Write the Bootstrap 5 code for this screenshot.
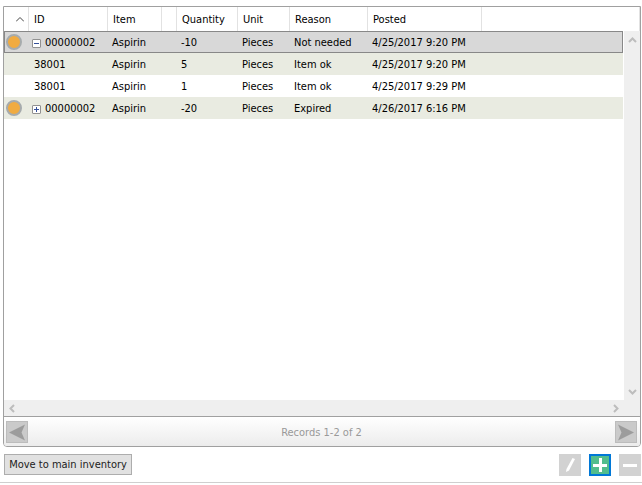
<!DOCTYPE html>
<html lang="en">
<head>
<meta charset="utf-8">
<meta name="viewport" content="width=device-width, initial-scale=1">
<title>Inventory records</title>
<link href="https://cdn.jsdelivr.net/npm/bootstrap@5.3.0/dist/css/bootstrap.min.css" rel="stylesheet">
<style>
body { font-family: "DejaVu Sans Condensed", "Noto Sans", sans-serif; font-size: 11px; line-height: 14px; color: #000; background: #fff; }
button { font: inherit; padding: 0; border-radius: 0; }
.page-wrap { padding: 6px 1px 2px 3px; }
.records { border: 1px solid #a0a0a0; border-radius: 0 0 4px 4px; }
.grid-table { table-layout: fixed; border-collapse: separate; border-spacing: 0; }
.grid-table th, .grid-table td { padding: 2px 0 0 5px; white-space: nowrap; vertical-align: middle; }
.grid-table th { height: 24px; font-weight: 400; border-right: 1px solid #e2e2e2; }
.grid-table th:last-child { border-right: 0; }
.grid-table td { height: 22px; padding-left: 4px; }
.grid-table td:first-child { padding: 0 0 0 2px; }
.grid-table td:nth-child(2) { padding-left: 5px; }
.grid-table td.parent-id { padding-left: 3px; }
.grid-table tbody tr:nth-child(even) td { background: #e9ebe1; }
.grid-table tr.selected td { background: #d8d8d8; }
.grid-table tr.selected { outline: 1px solid #888; outline-offset: -1px; }
.c-state { width: 25px; } .c-id { width: 79px; } .c-item { width: 54px; } .c-gap { width: 15px; }
.c-qty { width: 61px; } .c-unit { width: 52px; } .c-reason { width: 78px; } .c-posted { width: 114px; }
.state-dot { width: 16px; height: 16px; background: #f0ab41; border: 2px solid #a6abad; }
.toggle { width: 9px; height: 9px; border: 1px solid #919191; border-radius: 1px; background: #fff; margin-right: 4px; }
.side { width: 17px; }
.side-head { height: 24px; border-right: 1px solid #e2e2e2; }
.v-scroll { width: 16px; background: #efefef; margin-left: 1px; }
.h-scroll { height: 16px; background: #efefef; padding: 0 20px 0 4px; }
.scroll-btn { width: 9px; height: 9px; border: 0; background: none; }
.v-scroll .scroll-btn { margin: 4px 0; }
.pager { height: 30px; padding: 0 3px 0 2px; border-top: 1px solid #a0a0a0; background: linear-gradient(#fff, #ececec); border-radius: 0 0 3px 3px; color: #999; }
.pager span { padding-top: 2px; }
.pager-btn { width: 22px; height: 22px; border: 1px solid #bcbcbc; background: #cacaca; }
.actions { padding: 7px 0 4px 1px; }
.move-btn { width: 128px; height: 21px; border: 1px solid #adadad; background: #e1e1e1; color: #222; padding-top: 1px; }
.tool-btn { width: 22px; height: 22px; border: 0; background: #d2d2d2; }
.tool-btn.add { border: 2px solid #0078d7; background: #52bd8d; }
.tools { gap: 8px; }
.end-line { height: 1px; background: #cfcfcf; margin-bottom: 2px; }
svg { display: block; }
</style>
</head>
<body>
<div class="d-flex flex-column min-vh-100">
<main class="page-wrap d-flex flex-column flex-grow-1">
  <section class="records d-flex flex-column flex-grow-1" aria-label="Records">
    <div class="d-flex flex-grow-1">
      <div class="flex-grow-1">
        <table class="grid-table w-100">
          <colgroup><col class="c-state"><col class="c-id"><col class="c-item"><col class="c-gap"><col class="c-qty"><col class="c-unit"><col class="c-reason"><col class="c-posted"><col></colgroup>
          <thead>
            <tr>
              <th aria-label="State, sorted ascending"><svg class="ms-auto me-1" width="8" height="8" viewBox="0 0 8 8"><path d="M0 5.500 4 1.500 8 5.500" fill="none" stroke="#444"/></svg></th>
              <th>ID</th><th>Item</th><th></th><th>Quantity</th><th>Unit</th><th>Reason</th><th>Posted</th><th></th>
            </tr>
          </thead>
          <tbody>
            <tr class="selected">
              <td><div class="state-dot rounded-circle"></div></td>
              <td class="parent-id"><div class="d-flex align-items-center"><button type="button" class="toggle" aria-label="Collapse"><svg width="7" height="7"><path d="M1 3.5h5" stroke="#34509a"/></svg></button>00000002</div></td>
              <td>Aspirin</td><td></td><td>-10</td><td>Pieces</td><td>Not needed</td><td>4/25/2017 9:20 PM</td><td></td>
            </tr>
            <tr><td></td><td>38001</td><td>Aspirin</td><td></td><td>5</td><td>Pieces</td><td>Item ok</td><td>4/25/2017 9:20 PM</td><td></td></tr>
            <tr><td></td><td>38001</td><td>Aspirin</td><td></td><td>1</td><td>Pieces</td><td>Item ok</td><td>4/25/2017 9:29 PM</td><td></td></tr>
            <tr>
              <td><div class="state-dot rounded-circle"></div></td>
              <td class="parent-id"><div class="d-flex align-items-center"><button type="button" class="toggle" aria-label="Expand"><svg width="7" height="7"><path d="M1 3.5h5M3.5 1v5" stroke="#34509a"/></svg></button>00000002</div></td>
              <td>Aspirin</td><td></td><td>-20</td><td>Pieces</td><td>Expired</td><td>4/26/2017 6:16 PM</td><td></td>
            </tr>
          </tbody>
        </table>
      </div>
      <div class="side d-flex flex-column flex-shrink-0">
        <div class="side-head"></div>
        <div class="v-scroll d-flex flex-column justify-content-between align-items-center flex-grow-1">
          <button type="button" class="scroll-btn" aria-label="Scroll up"><svg width="9" height="9"><path d="M1 7 4.5 3.5 8 7" fill="none" stroke="#bdbdbd" stroke-width="2"/></svg></button>
          <button type="button" class="scroll-btn" aria-label="Scroll down"><svg width="9" height="9"><path d="M1 3 4.5 6.5 8 3" fill="none" stroke="#bdbdbd" stroke-width="2"/></svg></button>
        </div>
      </div>
    </div>
    <div class="h-scroll d-flex justify-content-between align-items-center">
      <button type="button" class="scroll-btn" aria-label="Scroll left"><svg width="9" height="9"><path d="M6 1 2.5 4.5 6 8" fill="none" stroke="#bdbdbd" stroke-width="2"/></svg></button>
      <button type="button" class="scroll-btn" aria-label="Scroll right"><svg width="9" height="9"><path d="M3 1 6.5 4.5 3 8" fill="none" stroke="#bdbdbd" stroke-width="2"/></svg></button>
    </div>
    <div class="pager d-flex justify-content-between align-items-center">
      <button type="button" class="pager-btn" aria-label="Previous records"><svg width="20" height="20"><path d="M2 10.5 18 2.500 14.500 10.5 18 18.500z" fill="#9c9c9c"/></svg></button>
      <span>Records 1-2 of 2</span>
      <button type="button" class="pager-btn" aria-label="Next records"><svg width="20" height="20"><path d="M18 10.5 2 2.500 5.500 10.5 2 18.500z" fill="#9c9c9c"/></svg></button>
    </div>
  </section>
  <div class="actions d-flex justify-content-between align-items-start">
    <button type="button" class="move-btn">Move to main inventory</button>
    <div class="tools d-flex">
      <button type="button" class="tool-btn" aria-label="Edit"><svg width="22" height="22"><path d="M13.500 4 16 5 10 16.500 7 18 7.500 15z" fill="#fff"/></svg></button>
      <button type="button" class="tool-btn add" aria-label="Add"><svg width="18" height="18"><path d="M2 9.500h14M9.500 2v14" stroke="#fff" stroke-width="3"/></svg></button>
      <button type="button" class="tool-btn" aria-label="Remove"><svg width="22" height="22"><path d="M4 11.500h14" stroke="#fff" stroke-width="3"/></svg></button>
    </div>
  </div>
</main>
<div class="end-line"></div>
</div>
<script src="https://cdn.jsdelivr.net/npm/bootstrap@5.3.0/dist/js/bootstrap.bundle.min.js"></script>
</body>
</html>
